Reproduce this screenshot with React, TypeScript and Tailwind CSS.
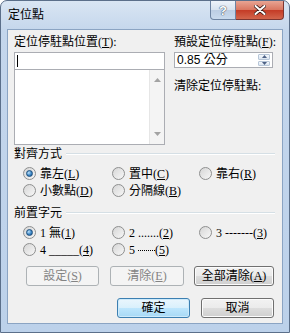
import React from 'react';

const serif = "[font-family:'Liberation_Serif','Noto_Sans_CJK_TC',serif]";
const sans = "[font-family:'Liberation_Sans','Noto_Sans_CJK_TC',sans-serif]";

function Radio({ checked = false, children }: { checked?: boolean; children: React.ReactNode }) {
  return (
    <div className="flex items-center h-[17px]">
      <span className="w-[13px] h-[13px] rounded-full border border-[#8e8f8f] bg-[linear-gradient(135deg,#d6d6d6,#f7f7f7)] flex items-center justify-center shrink-0">
        {checked && (
          <span className="w-[7px] h-[7px] rounded-full border border-[#1d4f7d] bg-[radial-gradient(circle_at_35%_35%,#bfe3fb,#3b86c6_55%,#16538c)]" />
        )}
      </span>
      <span className="ml-[4px] whitespace-nowrap flex items-center">{children}</span>
    </div>
  );
}

function Btn({
  children,
  disabled = false,
  primary = false,
  className = '',
}: {
  children: React.ReactNode;
  disabled?: boolean;
  primary?: boolean;
  className?: string;
}) {
  const look = disabled
    ? 'border-[#adb2b5] bg-[#f4f4f4] text-[#838383]'
    : primary
      ? 'border-[#3c7fb1] bg-[linear-gradient(#eaf6fd,#d9f0fc_50%,#bee6fd_50%,#a7d9f5)] shadow-[inset_0_0_0_1px_#cdeafb] text-black'
      : 'border-[#707070] bg-[linear-gradient(#f2f2f2,#ebebeb_50%,#dddddd_50%,#cfcfcf)] shadow-[inset_0_0_0_1px_#fcfcfc] text-black';
  return (
    <div
      className={`h-[20px] rounded-[3px] border flex items-center justify-center text-[12px] leading-none ${look} ${className}`}
    >
      {children}
    </div>
  );
}

function GroupHead({ title }: { title: string }) {
  return (
    <div className="flex items-center h-[16px]">
      <span>{title}</span>
      <div className="flex-1 ml-[4px] mr-[1px] flex flex-col">
        <div className="h-px bg-[#d5dfe5]" />
        <div className="h-px bg-white" />
      </div>
    </div>
  );
}

function Arrow({ up }: { up?: boolean }) {
  return (
    <svg width="7" height="4" viewBox="0 0 7 4">
      <path d={up ? 'M0 4 L3.5 0 L7 4 Z' : 'M0 0 L3.5 4 L7 0 Z'} fill="#a3a3a3" />
    </svg>
  );
}

export default function App() {
  return (
    <div className={`w-[290px] h-[333px] bg-white ${serif} text-[12px] text-black`}>
      <div className="w-full h-full rounded-t-[7px] border border-[#5b6f8a] bg-[linear-gradient(#d9e5f3,#c4d6ec_30px,#bcd1ea)] flex flex-col overflow-hidden">
        {/* Title bar */}
        <div className="h-[28px] flex items-start shrink-0">
          <span className="ml-[7px] mt-[6px] leading-[16px]">定位點</span>
          <div className="ml-auto mr-[5px] flex">
            <div className="w-[26px] h-[19px] rounded-bl-[4px] border border-t-0 border-[#6d83a2] bg-[linear-gradient(#eef3fa,#d7e2ef_50%,#bccde3_50%,#c9daee)] flex items-center justify-center">
              <span className="text-white font-bold text-[13px] leading-none [text-shadow:0_0_1px_#2b3a52,0_0_1px_#2b3a52] [font-family:'Liberation_Sans',sans-serif]">?</span>
            </div>
            <div className="w-[48px] h-[19px] rounded-br-[4px] border border-t-0 border-l-0 border-[#7d3530] bg-[linear-gradient(#e8a493,#d9755f_50%,#c43a25_50%,#d2654c)] flex items-center justify-center">
              <svg width="12" height="10" viewBox="0 0 12 10">
                <path d="M1.5 1 L10.5 9 M10.5 1 L1.5 9" stroke="#3a1a17" strokeWidth="3.6" strokeLinecap="round" />
                <path d="M1.5 1 L10.5 9 M10.5 1 L1.5 9" stroke="#ffffff" strokeWidth="2" strokeLinecap="round" />
              </svg>
            </div>
          </div>
        </div>

        {/* Client area */}
        <div className="mx-[6px] h-[295px] bg-[#f0f0f0] border border-[#8ba4c3] flex flex-col px-[6px] pt-[4px]">
          <div className="flex">
            {/* Left column */}
            <div className="w-[151px] flex flex-col">
              <div className="h-[16px] leading-[16px] whitespace-nowrap">
                定位停駐點位置(<u>T</u>):
              </div>
              <div className="mt-[2px] h-[93px] border border-[#abadb3] bg-white flex flex-col">
                <div className="h-[17px] border-b border-[#abadb3] flex items-center pl-[2px]">
                  <span className="w-px h-[12px] bg-black" />
                </div>
                <div className="flex-1 flex justify-end">
                  <div className="w-[15px] bg-[#f4f4f4] border-l border-[#e6e6e6] flex flex-col items-center justify-between py-[8px]">
                    <Arrow up />
                    <Arrow />
                  </div>
                </div>
              </div>
            </div>

            {/* Right column */}
            <div className="ml-[9px] w-[99px] flex flex-col">
              <div className="h-[16px] leading-[16px] whitespace-nowrap">
                預設定位停駐點(<u>F</u>):
              </div>
              <div className="mt-[2px] h-[16px] border border-[#abadb3] bg-white flex items-center">
                <span className={`${sans} pl-[2px] flex-1 leading-none`}>0.85 公分</span>
                <div className="w-[12px] h-full mr-[2px] flex flex-col gap-px py-px">
                  <div className="flex-1 rounded-[1px] border border-[#b7c6d8] bg-[linear-gradient(#f4f8fc,#dbe5f0)] flex items-center justify-center">
                    <svg width="5" height="3" viewBox="0 0 5 3"><path d="M0 3 L2.5 0 L5 3 Z" fill="#4d6185" /></svg>
                  </div>
                  <div className="flex-1 rounded-[1px] border border-[#b7c6d8] bg-[linear-gradient(#f4f8fc,#dbe5f0)] flex items-center justify-center">
                    <svg width="5" height="3" viewBox="0 0 5 3"><path d="M0 0 L2.5 3 L5 0 Z" fill="#4d6185" /></svg>
                  </div>
                </div>
              </div>
              <div className="mt-[10px] h-[16px] leading-[16px] whitespace-nowrap">清除定位停駐點:</div>
            </div>
          </div>

          {/* 對齊方式 */}
          <div className="mt-[1px]">
            <GroupHead title="對齊方式" />
          </div>
          <div className="mt-[3px] pl-[9px] grid grid-cols-[89px_87px_auto]">
            <Radio checked>靠左(<u>L</u>)</Radio>
            <Radio>置中(<u>C</u>)</Radio>
            <Radio>靠右(<u>R</u>)</Radio>
            <Radio>小數點(<u>D</u>)</Radio>
            <Radio>分隔線(<u>B</u>)</Radio>
          </div>

          {/* 前置字元 */}
          <div className="mt-[6px]">
            <GroupHead title="前置字元" />
          </div>
          <div className="mt-[3px] pl-[9px] grid grid-cols-[89px_87px_auto]">
            <Radio checked>1 無(<u>1</u>)</Radio>
            <Radio>2 .......(<u>2</u>)</Radio>
            <Radio>3 -------(<u>3</u>)</Radio>
            <Radio>4 _____(<u>4</u>)</Radio>
            <Radio>
              5&nbsp;
              <span className="inline-block w-[17px] h-px mt-[1px] bg-[repeating-linear-gradient(90deg,#000_0,#000_1px,transparent_1px,transparent_2px)]" />
              (<u>5</u>)
            </Radio>
          </div>

          {/* Action buttons */}
          <div className="mt-[8px] flex pl-[12px] gap-[11px]">
            <Btn disabled className="w-[73px]">設定(<u>S</u>)</Btn>
            <Btn disabled className="w-[74px]">清除(<u>E</u>)</Btn>
            <Btn className="w-[80px] ml-[-1px]">全部清除(<u>A</u>)</Btn>
          </div>

          {/* OK / Cancel */}
          <div className="mt-[12px] flex justify-end gap-[11px] pr-[2px]">
            <Btn primary className="w-[73px]">確定</Btn>
            <Btn className="w-[73px]">取消</Btn>
          </div>
        </div>
      </div>
    </div>
  );
}
